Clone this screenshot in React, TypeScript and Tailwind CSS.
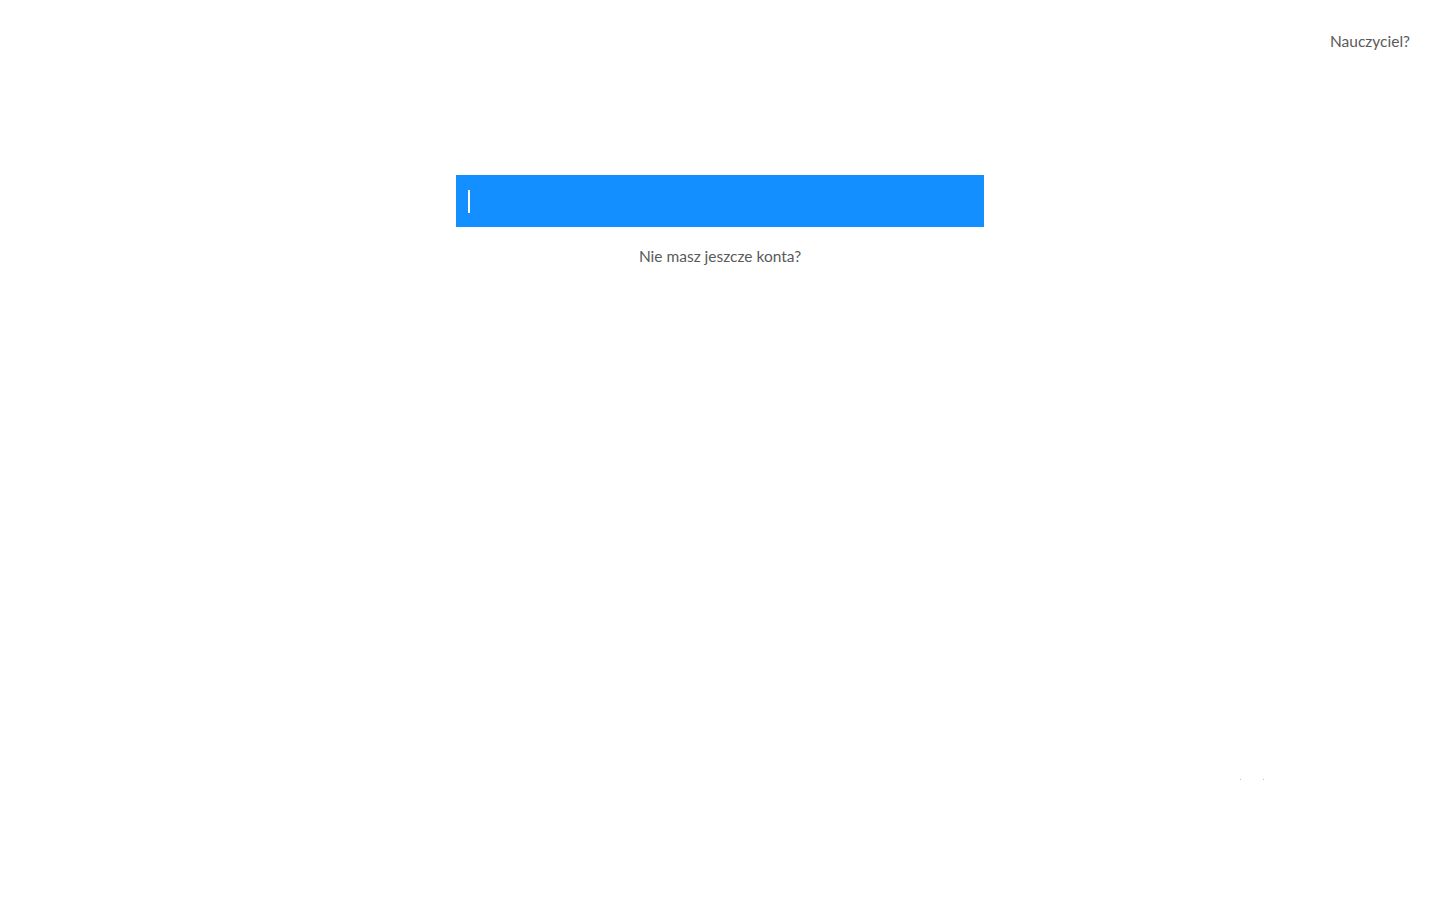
export default function App() {
  return (
    <div className="relative min-h-[900px] bg-white font-['Lato','Open_Sans',sans-serif] text-[15.5px] text-[#5a5a5a]">
      <header className="flex justify-end px-[30px] pt-[31px]">
        <a href="#" className="leading-[20px]">
          Nauczyciel?
        </a>
      </header>
      <main className="mt-[124px] flex flex-col items-center">
        <div className="flex h-[52px] w-[528px] items-center bg-[#148fff] px-[12px]">
          <span className="block h-[23px] w-[2px] bg-white" />
        </div>
        <a href="#" className="mt-[18px] leading-[22px]">
          Nie masz jeszcze konta?
        </a>
      </main>
      <span className="absolute left-[1240px] top-[779px] h-px w-px bg-[#bbb]" />
      <span className="absolute left-[1263px] top-[779px] h-px w-px bg-[#bbb]" />
    </div>
  );
}
